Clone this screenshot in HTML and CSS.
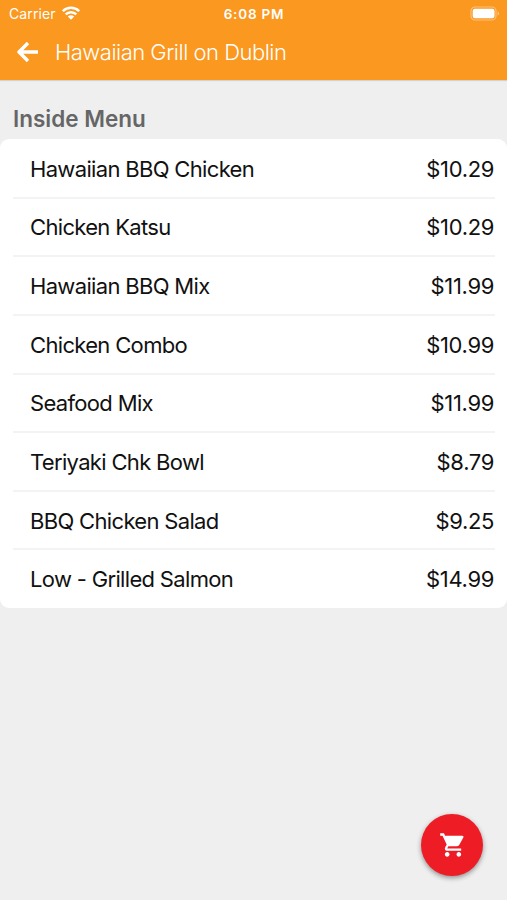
FILE: index.html
```html
<!DOCTYPE html>
<html lang="en">
<head>
<meta charset="utf-8">
<title>Hawaiian Grill on Dublin</title>
<link rel="stylesheet" href="styles.css">
</head>
<body>
<header class="header">
  <div class="status">
    <div class="carrier"><span class="carrier-name">Carrier</span>
      <svg class="wifi" viewBox="0 0 18 14"><g fill="none" stroke="#fff" stroke-width="2.6"><path d="M.8 5.2a11.6 11.6 0 0 1 16.4 0"/><path d="M3.7 8.4a7.5 7.5 0 0 1 10.6 0"/></g><path fill="#fff" d="M9 13.8 5.8 10.6a4.5 4.5 0 0 1 6.4 0z"/></svg>
    </div>
    <div class="time">6:08 PM</div>
    <svg class="battery" viewBox="0 0 30 15"><rect x="1" y="1" width="25" height="13" rx="4" fill="none" stroke="#fff" stroke-opacity=".4" stroke-width="1.2"/><rect x="2.7" y="2.7" width="21.8" height="9.6" rx="2.2" fill="#fff"/><path d="M27.6 5.3c2 .8 2 3.6 0 4.4z" fill="#fff" fill-opacity=".45"/></svg>
  </div>
  <div class="nav">
    <svg class="back" viewBox="0 0 22 22"><path d="M11 2 2 11l9 9M2.500 11H21" fill="none" stroke="#fff" stroke-width="3.5" stroke-linejoin="round"/></svg>
    <h1 class="title">Hawaiian Grill on Dublin</h1>
  </div>
</header>
<main class="content">
  <h2 class="section">Inside Menu</h2>
  <ul class="menu">
    <li class="item"><span class="name">Hawaiian BBQ Chicken</span><span class="price">$10.29</span></li>
    <li class="item"><span class="name">Chicken Katsu</span><span class="price">$10.29</span></li>
    <li class="item"><span class="name">Hawaiian BBQ Mix</span><span class="price">$11.99</span></li>
    <li class="item"><span class="name">Chicken Combo</span><span class="price">$10.99</span></li>
    <li class="item"><span class="name">Seafood Mix</span><span class="price">$11.99</span></li>
    <li class="item"><span class="name">Teriyaki Chk Bowl</span><span class="price">$8.79</span></li>
    <li class="item"><span class="name">BBQ Chicken Salad</span><span class="price">$9.25</span></li>
    <li class="item"><span class="name">Low - Grilled Salmon</span><span class="price">$14.99</span></li>
  </ul>
</main>
<button class="cart" aria-label="Cart"><svg viewBox="0 0 24 24"><path fill="#fff" d="M7 18c-1.1 0-1.990.9-1.990 2S5.900 22 7 22s2-.9 2-2-.9-2-2-2zM1 2v2h2l3.600 7.590-1.350 2.450c-.16.280-.25.610-.25.960 0 1.100.9 2 2 2h12v-2H7.420c-.14 0-.25-.11-.25-.25l.03-.12.9-1.630h7.450c.75 0 1.410-.41 1.750-1.030l3.580-6.490A1 1 0 0 0 20 4H5.210l-.94-2H1zm16 16c-1.100 0-1.990.9-1.990 2s.89 2 1.990 2 2-.9 2-2-.9-2-2-2z"/></svg></button>
</body>
</html>
```
FILE: styles.css
```css
* { box-sizing: border-box; }
body {
  margin: 0;
  height: 900px;
  overflow: hidden;
  background: #efefef;
  color: #111;
  font-family: Inter, "Liberation Sans", sans-serif;
}
.header {
  height: 80px;
  background: #fa9820;
  color: #fff;
  box-shadow: 0 1px 1px rgba(0, 0, 0, .12);
}
.status {
  display: grid;
  grid-template-columns: 1fr auto 1fr;
  align-items: center;
  height: 27px;
  padding: 0 7px 0 9px;
}
.carrier { display: flex; align-items: center; gap: 6px; font-size: 14px; letter-spacing: .1px; }
.wifi { width: 18px; height: 14px; margin-top: -2px; }
.time { font-size: 13.5px; font-weight: 600; letter-spacing: .8px; margin-right: 1px; }
.battery { width: 30px; height: 15px; justify-self: end; }
.nav { display: flex; align-items: center; height: 50px; padding-left: 17px; gap: 16px; }
.back { width: 22px; height: 22px; }
.title { margin: 0; font-size: 22px; font-weight: 300; letter-spacing: -.5px; white-space: nowrap; }
.section {
  margin: 0;
  height: 59px;
  padding: 24px 13px 0;
  font-size: 22.5px;
  line-height: 30px;
  font-weight: 600;
  letter-spacing: 0;
  color: #666;
}
.menu { margin: 0; padding: 1px 12px 0 13px; list-style: none; background: #fff; border-radius: 9px; }
.item {
  display: flex;
  justify-content: space-between;
  align-items: center;
  height: 58.625px;
  padding: 1px 0 0 17px;
  border-bottom: 2px solid #f3f3f3;
  font-size: 22px;
}
.name { letter-spacing: -.67px; }
.price { letter-spacing: -.35px; padding-right: 1px; }
.item:last-child { height: 57.625px; border-bottom-color: transparent; }
.cart {
  position: absolute;
  left: 421px;
  top: 814px;
  width: 62px;
  height: 62px;
  padding: 0 0 0 2px;
  display: grid;
  place-items: center;
  border: 0;
  border-radius: 50%;
  background: #ee1c25;
  box-shadow: 0 2px 5px rgba(0, 0, 0, .4);
}
.cart svg { width: 28px; height: 28px; }
```
